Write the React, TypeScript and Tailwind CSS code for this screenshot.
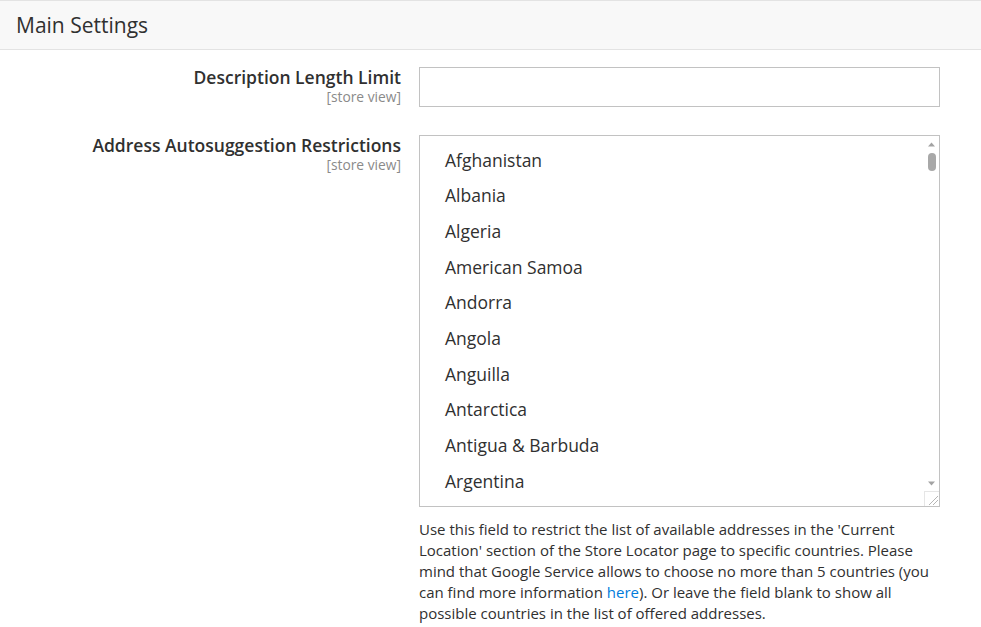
const COUNTRIES = [
  "Afghanistan",
  "Albania",
  "Algeria",
  "American Samoa",
  "Andorra",
  "Angola",
  "Anguilla",
  "Antarctica",
  "Antigua & Barbuda",
  "Argentina",
];

const font = "font-['Open_Sans','Noto_Sans',sans-serif]";

function FieldLabel({ title }: { title: string }) {
  return (
    <div className="flex flex-col items-end text-right">
      <span className="text-[17.5px] leading-[20px] font-semibold text-[#303030]">{title}</span>
      <span className="mt-[2px] text-[13.8px] leading-[16px] text-[#8a8a8a]">[store view]</span>
    </div>
  );
}

function FakeScrollbar() {
  return (
    <div className="absolute right-0 top-0 bottom-0 flex w-[15px] flex-col items-center bg-white">
      <svg width="15" height="15" viewBox="0 0 15 15" className="mt-[1px]">
        <path d="M4 9.5 L7.5 5.5 L11 9.5 Z" fill="#a3a3a3" />
      </svg>
      <div className="mt-[1px] h-[18px] w-[8px] rounded-[4px] bg-[#a8a8a8]" />
      <div className="flex-1" />
      <svg width="15" height="15" viewBox="0 0 15 15">
        <path d="M4 5.5 L7.5 9.5 L11 5.5 Z" fill="#a3a3a3" />
      </svg>
      <div className="h-[15px] w-[15px] border-l border-t border-[#e6e6e6]">
        <svg width="14" height="14" viewBox="0 0 14 14">
          <path d="M4 13 L13 4 M8 13 L13 8" stroke="#b5b5b5" strokeWidth="1" />
        </svg>
      </div>
    </div>
  );
}

export default function App() {
  return (
    <div className={`${font} min-h-screen w-[981px] bg-white text-[#303030]`}>
      <div className="flex h-[50px] items-center border-t border-b border-[#e3e3e3] bg-[#f8f8f8] pl-[16px]">
        <h2 className="text-[21px] leading-[26px] text-[#303030]">Main Settings</h2>
      </div>

      <div className="grid grid-cols-[401px_521px] gap-x-[18px] pt-[17px]">
        <FieldLabel title="Description Length Limit" />
        <input
          type="text"
          className="h-[40px] w-full border border-[#c2c2c2] bg-white px-[10px] outline-none"
        />

        <div className="pt-[28px]">
          <FieldLabel title="Address Autosuggestion Restrictions" />
        </div>
        <div className="pt-[28px]">
          <div className="relative h-[372px] w-full overflow-hidden border border-[#c2c2c2] bg-white">
            <ul className="pt-[6px] pl-[25px]">
              {COUNTRIES.map((c) => (
                <li key={c} className="flex h-[35.67px] items-center text-[17.5px] text-[#303030]">
                  {c}
                </li>
              ))}
            </ul>
            <FakeScrollbar />
          </div>
          <p className="mt-[12px] text-[15px] leading-[21px] text-[#303030]">
            Use this field to restrict the list of available addresses in the 'Current Location'
            section of the Store Locator page to specific countries. Please mind that Google
            Service allows to choose no more than 5 countries (you can find more information{" "}
            <a href="#" className="text-[#007bdb]">
              here
            </a>
            ). Or leave the field blank to show all possible countries in the list of offered
            addresses.
          </p>
        </div>
      </div>
    </div>
  );
}
